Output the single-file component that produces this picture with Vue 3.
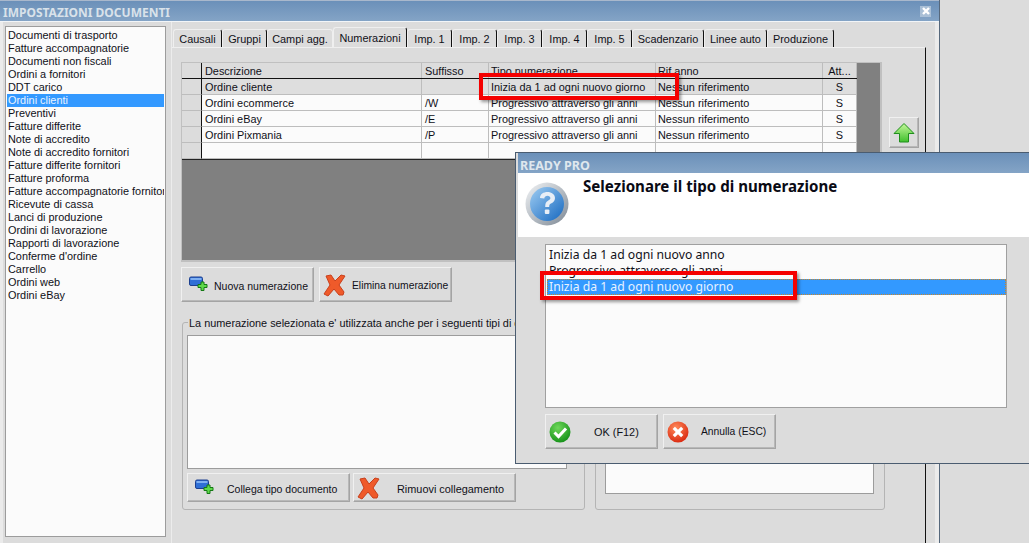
<script setup>
const docs = ['Documenti di trasporto','Fatture accompagnatorie','Documenti non fiscali','Ordini a fornitori','DDT carico','Ordini clienti','Preventivi','Fatture differite','Note di accredito','Note di accredito fornitori','Fatture differite fornitori','Fatture proforma','Fatture accompagnatorie fornitori','Ricevute di cassa','Lanci di produzione','Ordini di lavorazione','Rapporti di lavorazione','Conferme d\'ordine','Carrello','Ordini web','Ordini eBay']
const tabs = [
  { t:'Causali', w:49 },{ t:'Gruppi', w:45 },{ t:'Campi agg.', w:66 },{ t:'Numerazioni', w:74, on:true },
  { t:'Imp. 1', w:45 },{ t:'Imp. 2', w:45 },{ t:'Imp. 3', w:45 },{ t:'Imp. 4', w:45 },{ t:'Imp. 5', w:45 },
  { t:'Scadenzario', w:72 },{ t:'Linee auto', w:63 },{ t:'Produzione', w:67 }
]
const heads = ['Descrizione','Suffisso','Tipo numerazione','Rif anno','Att...']
const rows = [
  ['Ordine cliente','','Inizia da 1 ad ogni nuovo giorno','Nessun riferimento','S'],
  ['Ordini ecommerce','/W','Progressivo attraverso gli anni','Nessun riferimento','S'],
  ['Ordini eBay','/E','Progressivo attraverso gli anni','Nessun riferimento','S'],
  ['Ordini Pixmania','/P','Progressivo attraverso gli anni','Nessun riferimento','S'],
  ['','','','','']
]
const choices = ['Inizia da 1 ad ogni nuovo anno','Progressivo attraverso gli anni','Inizia da 1 ad ogni nuovo giorno']
</script>

<template>
  <div class="screen">
    <div class="window">
      <div class="titlebar">
        <span>IMPOSTAZIONI DOCUMENTI</span>
        <span class="close">
          <svg width="10" height="10" viewBox="0 0 10 10"><path d="M2 2l6 6M8 2l-6 6" stroke="#fff" stroke-width="2.4"/></svg>
        </span>
      </div>
      <div class="body">
        <ul class="doclist">
          <li v-for="(d, i) in docs" :key="d" :class="{ sel: i === 5 }">{{ d }}</li>
        </ul>
        <div class="tabarea">
          <div class="tabs">
            <div v-for="t in tabs" :key="t.t" class="tab" :class="{ on: t.on }" :style="{ width: t.w + 'px' }">{{ t.t }}</div>
          </div>
          <div class="pane">
            <div class="toprow">
              <div class="grid">
                <div class="row head">
                  <div class="cell mark"></div>
                  <div v-for="h in heads" :key="h" class="cell">{{ h }}</div>
                </div>
                <div v-for="(r, i) in rows" :key="i" class="row" :class="{ cur: i === 0 }">
                  <div class="cell mark"></div>
                  <div v-for="(c, j) in r" :key="j" class="cell">{{ c }}</div>
                </div>
              </div>
              <button class="btn up">
                <svg width="22" height="22" viewBox="0 0 22 22">
                  <defs><linearGradient id="ga" x1="0" y1="0" x2="0" y2="1"><stop offset="0" stop-color="#c4f79a"/><stop offset="1" stop-color="#3fc02c"/></linearGradient></defs>
                  <path d="M11 1.500L21 11.500h-5.500V20h-9v-8.500H1z" fill="url(#ga)" stroke="#1f8f1c"/>
                </svg>
              </button>
            </div>
            <div class="btnrow">
              <button class="btn b133">
                <svg class="ic-add" width="20" height="18" viewBox="0 0 20 18"><rect x="0.500" y="1" width="13" height="8.500" rx="1.500" fill="#2f6fd6" stroke="#1c3f8f"/><rect x="1.500" y="2" width="11" height="2" fill="#7fb0f2"/><path d="M10 6h3V3.500h3V6h3v3h-3v3h-3V9h-3z" transform="translate(-1 2.500)" fill="#5fd94a" stroke="#157a15"/></svg>
                <span class="lbl">Nuova numerazione</span>
              </button>
              <button class="btn b133 gap5">
                <svg class="ic-x" width="24" height="24" viewBox="0 0 24 24"><path d="M3 3l5-1 4 6 6-6 4 1-6 9 5 7-1 3-4 0-5-6-6 7-4-2 6-9z" fill="#ef5a2a" stroke="#c8401c"/></svg>
                <span class="lbl narrow">Elimina numerazione</span>
              </button>
            </div>
            <div class="groups">
              <fieldset class="group g1">
                <legend>La numerazione selezionata e' utilizzata anche per i seguenti tipi di documento</legend>
                <div class="area a1"></div>
                <div class="linkrow">
                  <button class="btn b163">
                    <svg class="ic-add2" width="20" height="18" viewBox="0 0 20 18"><rect x="0.500" y="1" width="13" height="8.500" rx="1.500" fill="#2f6fd6" stroke="#1c3f8f"/><rect x="1.500" y="2" width="11" height="2" fill="#7fb0f2"/><path d="M10 6h3V3.500h3V6h3v3h-3v3h-3V9h-3z" transform="translate(-1 2.500)" fill="#5fd94a" stroke="#157a15"/></svg>
                    <span class="lbl2">Collega tipo documento</span>
                  </button>
                  <button class="btn b163 gap3">
                    <svg class="ic-x2" width="24" height="24" viewBox="0 0 24 24"><path d="M3 3l5-1 4 6 6-6 4 1-6 9 5 7-1 3-4 0-5-6-6 7-4-2 6-9z" fill="#ef5a2a" stroke="#c8401c"/></svg>
                    <span class="lbl3">Rimuovi collegamento</span>
                  </button>
                </div>
              </fieldset>
              <fieldset class="group g2">
                <div class="area a2"></div>
              </fieldset>
            </div>
          </div>
        </div>
      </div>
    </div>

    <div class="mark-red r1"></div>

    <div class="dialog">
      <div class="dtitle">READY PRO</div>
      <div class="dhead">
        <svg class="qicon" width="44" height="44" viewBox="0 0 44 44">
          <defs>
            <linearGradient id="qb" x1="0" y1="0" x2="1" y2="1"><stop offset="0" stop-color="#9fcdf2"/><stop offset="1" stop-color="#1668c0"/></linearGradient>
            <linearGradient id="qr" x1="0" y1="0" x2="1" y2="1"><stop offset="0" stop-color="#f2f4f6"/><stop offset="1" stop-color="#7d8894"/></linearGradient>
          </defs>
          <circle cx="22" cy="22" r="21.500" fill="url(#qr)"/>
          <circle cx="22" cy="22" r="17" fill="url(#qb)"/>
          <path d="M15 16c0-4 3.500-6 7.500-6s7.500 2.500 7.500 6c0 3-2 4.500-4 5.500-1.500.8-1.800 1.500-1.800 3.500h-4c0-3.500.6-5 2.800-6.300 1.500-.9 2.400-1.500 2.400-2.700 0-1.300-1.300-2.300-2.900-2.300-1.800 0-3 1-3.200 2.800z" fill="#e8eef6"/>
          <rect x="19.800" y="27.500" width="4.600" height="4.600" rx="1" fill="#e8eef6"/>
        </svg>
        <div class="dq">Selezionare il tipo di numerazione</div>
      </div>
      <div class="dbody">
        <ul class="choices">
          <li v-for="(c, i) in choices" :key="c" :class="{ sel: i === 2 }">{{ c }}</li>
        </ul>
        <div class="dbtns">
          <button class="btn b113">
            <svg class="ic-round" width="22" height="22" viewBox="0 0 22 22">
              <defs><radialGradient id="gc" cx=".4" cy=".3" r=".8"><stop offset="0" stop-color="#6fd85a"/><stop offset="1" stop-color="#0c8a12"/></radialGradient></defs>
              <circle cx="11" cy="11" r="10.500" fill="url(#gc)"/>
              <path d="M5.500 11.500l4 4 7.500-8" fill="none" stroke="#fff" stroke-width="3"/>
            </svg>
            <span class="lblok">OK (F12)</span>
          </button>
          <button class="btn b113 gap5">
            <svg class="ic-round" width="22" height="22" viewBox="0 0 22 22">
              <defs><radialGradient id="rc" cx=".4" cy=".3" r=".8"><stop offset="0" stop-color="#ff8a5a"/><stop offset="1" stop-color="#d61f08"/></radialGradient></defs>
              <circle cx="11" cy="11" r="10.500" fill="url(#rc)"/>
              <path d="M6.800 6.800l8.400 8.400M15.200 6.800l-8.400 8.400" fill="none" stroke="#fff" stroke-width="3.200"/>
            </svg>
            <span class="lblan">Annulla (ESC)</span>
          </button>
        </div>
      </div>
    </div>

    <div class="mark-red r2"></div>
  </div>
</template>

<style>
html, body { margin: 0; overflow: hidden; }
</style>

<style scoped>
.screen {
  position: relative;
  width: 1029px;
  height: 543px;
  overflow: hidden;
  background: #dcdcdc;
  font-family: "Liberation Sans", Arial, sans-serif;
  font-size: 10.900px;
  color: #101018;
}
svg { flex: none; }
.window {
  width: 939px;
  height: 600px;
  border-right: 1px solid #56687c;
  box-sizing: content-box;
  display: flex;
  flex-direction: column;
}
.titlebar {
  height: 20px;
  box-sizing: content-box;
  border-top: 1px solid #a9b8cc;
  border-bottom: 1px solid #f2f5f8;
  background: linear-gradient(#6b90b9, #84a4c6);
  display: flex;
  align-items: center;
  justify-content: space-between;
  padding: 0 8px 0 3px;
  color: #d9e2ea;
  font-family: "Noto Sans", sans-serif;
  font-weight: 700;
  font-size: 12px;
}
.titlebar > span:first-child { padding-top: 3px; }
.close {
  width: 11px;
  height: 11px;
  background: #a9bfd6;
  display: flex;
  align-items: center;
  justify-content: center;
}
.body {
  flex: 1;
  display: flex;
  border-left: 3px solid #ebebeb;
  border-right: 4px solid #ebebeb;
  min-height: 0;
}
.doclist {
  list-style: none;
  margin: 4px 0 0 2px;
  padding: 2px 1px 0;
  width: 157px;
  height: 507px;
  border: 1px solid #9c9c9c;
  background: #fbfbfb;
  overflow: hidden;
  flex: none;
  box-sizing: content-box;
}
.doclist li {
  height: 13px;
  line-height: 13px;
  padding-left: 1px;
  white-space: nowrap;
  overflow: hidden;
}
.doclist li.sel {
  background: #3399ff;
  color: #e8f2ff;
}
.tabarea {
  margin-left: 5px;
  border-left: 1px solid #ececec;
  flex: 1;
  min-width: 0;
  display: flex;
  flex-direction: column;
  padding-top: 5px;
}
.tabs {
  display: flex;
  height: 20px;
  padding-left: 1px;
}
.tab {
  flex: none;
  box-sizing: border-box;
  height: 18px;
  margin-top: 2px;
  border-top: 1px solid #efefef;
  border-left: 1px solid #efefef;
  border-right: 1px solid #111;
  border-radius: 3px 3px 0 0;
  background: #dcdcdc;
  text-align: center;
  line-height: 18px;
  white-space: nowrap;
}
.tab.on {
  height: 20px;
  margin-top: 0;
  line-height: 20px;
  position: relative;
  z-index: 1;
}
.tab:nth-child(3) { border-right-color: #efefef; }
.pane {
  width: 754px;
  height: 520px;
  box-sizing: border-box;
  border-top: 1px solid #efefef;
  border-right: 1px solid #111;
  padding: 14px 0 0 9px;
}
.toprow { display: flex; align-items: flex-start; }
.grid {
  width: 701px;
  height: 200px;
  flex: none;
  box-sizing: border-box;
  background: #808080;
  border: 1px solid #c0c0c0;
  border-width: 1px 2px 2px 1px;
}
.row {
  display: grid;
  grid-template-columns: 20px 220px 67px 167px 167px 34px;
  width: 675px;
  height: 16px;
  background: #fbfbfb;
}
.row:last-child { border-bottom: 1px solid #222; }
.row.head { background: #dcdcdc; border-bottom: 1px solid #111; height: 15px; }
.row.cur { background: #dedede; }
.cell {
  box-sizing: border-box;
  border-right: 1px solid #bdbdbd;
  border-bottom: 1px solid #bdbdbd;
  padding-left: 3px;
  line-height: 17px;
  white-space: nowrap;
  overflow: hidden;
}
.cell:nth-child(4), .cell:nth-child(5) { padding-left: 2px; }
.head .cell { border-bottom: none; }
.cell.mark {
  background: #dcdcdc;
  border-right: 1px solid #111;
}
.cell:last-child { text-align: center; padding-left: 0; }
.btn {
  display: flex;
  align-items: center;
  padding: 0;
  margin: 0;
  background: #dcdcdc;
  border: 1px solid;
  border-color: #f0f0f0 #a4a4a4 #a4a4a4 #f0f0f0;
  box-shadow: inset -1px -1px 0 #b8b8b8;
  box-sizing: border-box;
  font: inherit;
  color: inherit;
  flex: none;
  white-space: nowrap;
}
.up {
  width: 30px;
  height: 31px;
  margin: 55px 0 0 7px;
  justify-content: center;
}
.btnrow {
  display: flex;
  margin-top: 5px;
}
.b133 { width: 133px; height: 35px; }
.gap5 { margin-left: 5px; }
.gap3 { margin-left: 3px; }
.ic-add { margin-left: 7px; }
.ic-x { margin-left: 3px; }
.lbl { margin-left: 5px; padding-top: 2px; font-size: 10.500px; }
.lbl.narrow { font-size: 10.300px; }
.groups {
  display: flex;
  margin-top: 14px;
  margin-left: 1px;
  align-items: flex-start;
}
.group {
  margin: 0;
  padding: 0;
  border: 1px solid #b4b4b4;
  border-radius: 3px;
  box-sizing: border-box;
  min-width: 0;
}
.g1 { width: 403px; height: 194px; padding: 0 0 0 4px; }
.g2 { width: 290px; height: 188px; margin: 6px 0 0 10px; padding: 13px 0 0 9px; }
legend {
  padding: 0 0 0 1px;
  margin-left: 1px;
  white-space: nowrap;
  line-height: 15px;
  height: 13px;
}
.area {
  background: #fbfbfb;
  border: 1px solid #9c9c9c;
  box-sizing: border-box;
}
.a1 { width: 380px; height: 134px; margin-top: 6px; }
.a2 { width: 269px; height: 158px; }
.linkrow { display: flex; margin-top: 4px; }
.b163 { width: 163px; height: 29px; }
.ic-add2 { margin-left: 7px; }
.ic-x2 { margin-left: 3px; }
.lbl2 { margin-left: 12px; padding-top: 3px; font-size: 10.500px; }
.lbl3 { margin-left: 16px; padding-top: 3px; }

.mark-red {
  position: absolute;
  box-sizing: border-box;
  border: 4px solid #f50000;
  box-shadow: 2px 2px 3px rgba(0,0,0,.4);
}
.r1 { left: 479px; top: 73px; width: 200px; height: 27px; }
.r2 { left: 540px; top: 271px; width: 257px; height: 29px; }

.dialog {
  position: absolute;
  left: 515px;
  top: 152px;
  width: 600px;
  height: 312px;
  box-sizing: border-box;
  border: 1px solid #4a5c70;
  background: #dcdcdc;
  display: flex;
  flex-direction: column;
  padding: 0 0 0 1px;
}
.dtitle {
  height: 20px;
  box-sizing: border-box;
  background: linear-gradient(#6b90b9, #84a4c6);
  color: #dfe7ee;
  font-family: "Noto Sans", sans-serif;
  font-weight: 700;
  font-size: 12.500px;
  line-height: 20px;
  padding: 3px 0 0 2px;
  margin-left: 1px;
}
.dhead {
  height: 64px;
  background: #fff;
  display: flex;
  margin-left: 1px;
  flex: none;
}
.qicon { margin: 9px 0 0 7px; }
.dq {
  font-family: "Noto Sans", sans-serif;
  font-weight: 700;
  font-size: 15.100px;
  margin: 4px 0 0 14px;
  line-height: 18px;
  color: #0a0a14;
}
.dbody { padding: 7px 0 0 27px; margin-left: 1px; }
.choices {
  list-style: none;
  margin: 0;
  padding: 2px 0 0 1px;
  width: 462px;
  height: 164px;
  box-sizing: border-box;
  border: 1px solid #a0a0a0;
  background: #fbfbfb;
  font-family: "Noto Sans", sans-serif;
}
.choices li {
  height: 16px;
  line-height: 16px;
  padding-left: 2px;
  font-size: 12.200px;
}
.choices li.sel {
  background: #3399ff;
  color: #e8f2ff;
  outline: 1px dotted #c8862a;
  outline-offset: -1px;
}
.dbtns { display: flex; margin-top: 6px; }
.b113 { width: 113px; height: 35px; }
.ic-round { margin-left: 3px; }
.lblok { margin-left: 23px; }
.lblan { margin-left: 12px; font-size: 10.300px; }
</style>
